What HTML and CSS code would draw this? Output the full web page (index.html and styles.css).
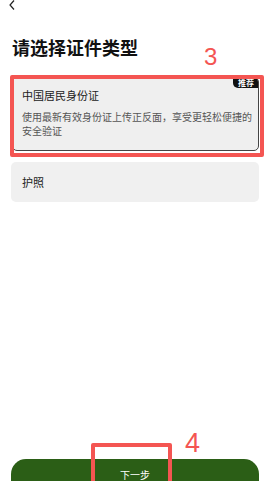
FILE: index.html
```html
<!DOCTYPE html>
<html lang="zh">
<head>
<meta charset="utf-8">
<link rel="stylesheet" href="styles.css">
</head>
<body>
<div class="page">
  <div class="back">
    <svg width="6" height="10" viewBox="0 0 6 10"><path d="M5 0.5 L1 5 L5 9.5" fill="none" stroke="#222" stroke-width="1.2"/></svg>
  </div>
  <h1 class="title">请选择证件类型</h1>
  <div class="card card-selected">
    <span class="badge">推荐</span>
    <div class="card-title">中国居民身份证</div>
    <div class="card-desc">使用最新有效身份证上传正反面，享受更轻松便捷的安全验证</div>
  </div>
  <div class="card card-plain">
    <div class="card-title">护照</div>
  </div>
  <div class="spacer"></div>
  <button class="next">下一步</button>
</div>
<div class="anno anno-box anno-box-3"></div>
<div class="anno anno-num anno-num-3">3</div>
<div class="anno anno-box anno-box-4"></div>
<div class="anno anno-num anno-num-4">4</div>
</body>
</html>
```
FILE: styles.css
```css
html, body {
  margin: 0;
  padding: 0;
  width: 267px;
  height: 481px;
  overflow: hidden;
  background: #fff;
  font-family: "Noto Sans CJK SC", "Noto Sans", sans-serif;
}
.page {
  width: 267px;
  height: 501px;
  box-sizing: border-box;
  padding: 0 8px 0 11px;
  display: flex;
  flex-direction: column;
}
.back {
  height: 10px;
  margin-left: -2px;
  display: flex;
  align-items: flex-start;
}
.back svg { display: block; }
.title {
  margin: 25px 0 0 1px;
  font-size: 18px;
  line-height: 24px;
  font-weight: 700;
  color: #111;
}
.card {
  position: relative;
  background: #efefef;
  border-radius: 5px;
  box-sizing: border-box;
}
.card-selected {
  margin: 18px 0 0 1px;
  border: 1px solid #444;
  padding: 9px 6px 12px 9px;
}
.card-plain {
  margin-top: 11px;
  height: 40px;
  padding: 0 11px;
  display: flex;
  align-items: center;
  background: #f0f0f0;
}
.card-title {
  font-size: 11px;
  line-height: 16px;
  color: #222;
}
.card-desc {
  margin-top: 7px;
  font-size: 10px;
  line-height: 14px;
  color: #555;
}
.badge {
  position: absolute;
  top: 0;
  right: 0;
  background: #111;
  color: #fff;
  font-size: 8px;
  line-height: 10px;
  font-weight: 700;
  padding: 0 4px 0 5px;
  border-radius: 0 4px 0 5px;
}
.spacer { flex: 1; }
.next {
  flex: none;
  height: 42px;
  border: none;
  border-radius: 15px;
  background: #2b5e16;
  color: #fff;
  font-family: inherit;
  font-size: 10px;
  line-height: 12px;
  padding: 10px 0 0;
  display: flex;
  justify-content: center;
  align-items: flex-start;
}
.anno { position: absolute; }
.anno-box {
  border: 4px solid #f45552;
  border-radius: 2px;
  box-sizing: border-box;
}
.anno-box-3 { left: 10px; top: 75px; width: 254px; height: 82px; }
.anno-box-4 { left: 91px; top: 443px; width: 81px; height: 60px; }
.anno-num {
  color: #f45552;
  font-family: "Liberation Sans", sans-serif;
  font-weight: 400;
}
.anno-num-3 { left: 204px; top: 44px; font-size: 24px; line-height: 26px; }
.anno-num-4 { left: 185px; top: 429px; font-size: 27px; line-height: 29px; }
```
